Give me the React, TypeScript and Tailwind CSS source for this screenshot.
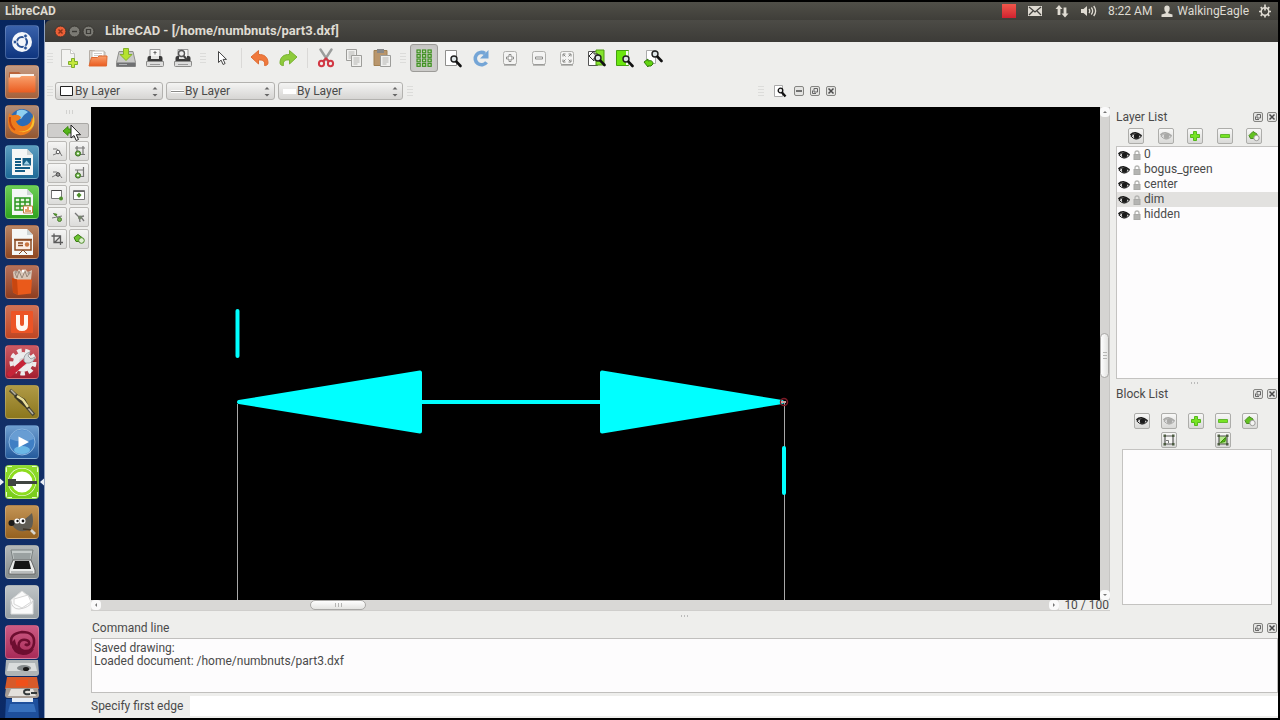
import React, { useState } from "react";
import type { ReactNode } from "react";

/* ---------- shared pieces ---------- */

function Svg({ size = 20, className = "", children }: { size?: number; className?: string; children: ReactNode }) {
  return (
    <svg viewBox={`0 0 ${size} ${size}`} width={size} height={size} className={`block shrink-0 ${className}`} aria-hidden="true">
      {children}
    </svg>
  );
}

function Handle({ className }: { className: string }) {
  return (
    <span className={`flex shrink-0 flex-col items-center justify-center gap-0.5 ${className}`} aria-hidden="true">
      {[0, 1, 2, 3].map((i) => (
        <span key={i} className="h-px w-1.5 bg-[#dcdcda]" />
      ))}
    </span>
  );
}

function ToolButton({ label, pressed, children }: { label: string; pressed?: boolean; children: ReactNode }) {
  return (
    <button
      type="button"
      aria-label={label}
      title={label}
      aria-pressed={pressed}
      className={`flex h-7 w-7 shrink-0 items-center justify-center rounded-[3px] border ${
        pressed ? "border-[#9c9b98] bg-[#cdccca] shadow-inner" : "border-transparent"
      }`}
    >
      {children}
    </button>
  );
}

/* ---------- main toolbar icons ---------- */

const Magnifier = ({ x = 0, y = 0 }: { x?: number; y?: number }) => (
  <g transform={`translate(${x} ${y})`}>
    <circle cx="4" cy="4" r="3" fill="#dfe6e8" stroke="#222" strokeWidth="1.400" />
    <path d="M6.4 6.6 10.500 11" stroke="#111" strokeWidth="2.600" strokeLinecap="round" />
  </g>
);

const NewIcon = () => (
  <Svg>
    <path d="M2.5 1.5h9l4 4v13h-13z" fill="#f3f3f1" stroke="#bdbdb9" />
    <path d="M11.5 1.5v4h4" fill="#fff" stroke="#c6c6c2" />
    <path d="M12.5 10.5h3v3h3v3h-3v3h-3v-3h-3v-3h3z" fill="#c5e83c" stroke="#7fae2c" />
  </Svg>
);
const OpenIcon = () => (
  <Svg>
    <path d="M1.5 17V2.500h5l1.5 1.5h9V16" fill="#dcd9d4" stroke="#b5aea6" />
    <path d="M4 3h12v8H4z" fill="#fff" stroke="#c2beb8" />
    <path d="M6 5.500h8M6 7.500h8" stroke="#ccc" />
    <path d="M1 18 3.500 9.500h6l1.500-1.500h8L18.500 18z" fill="url(#folderOrange)" stroke="#e0682f" />
  </Svg>
);
const SaveIcon = () => (
  <Svg>
    <path d="M3 3.500h14l2.500 11v4h-19v-4z" fill="#c9c9c7" stroke="#8e8e8c" />
    <path d="M.8 14.500h18.400v4H.8z" fill="#6f7072" />
    <path d="M3 16.500h8" stroke="#aeb0b2" />
    <path d="M7.500.5h5v6h3.500L10 12.500 4 6.500h3.500z" fill="#b5e22f" stroke="#84b22a" />
  </Svg>
);
const PrintIcon = ({ preview = false }: { preview?: boolean }) => (
  <Svg>
    <path d="M5 1.500h10V9H5z" fill="#f6f6f5" stroke="#999" />
    <path d="M2.500 10Q2.500 8 4.500 8h11q2 0 2 2v4h-15z" fill="#3a3a3a" />
    <path d="M6 8h8v3H6z" fill="#e3e3e1" />
    <path d="M1.500 13.500h17v4q0 1-1 1h-15q-1 0-1-1z" fill="#dededd" stroke="#8c8c8a" />
    <path d="M5 16.500h10" stroke="#999" />
    {preview ? (
      <>
        <circle cx="8.500" cy="5.500" r="3" fill="#eee" stroke="#555" strokeWidth="1.400" />
        <path d="m10.800 8 3 3.500" stroke="#444" strokeWidth="2" />
      </>
    ) : (
      <path d="M10 3v3.500M8.500 4.500h3" stroke="#666" />
    )}
  </Svg>
);
const PointerIcon = () => (
  <Svg>
    <path d="M6.500 3.500v11l2.600-2.400 2 4.400 2-1-2-4.100h3.400z" fill="#fff" stroke="#444" />
  </Svg>
);
const UndoIcon = () => (
  <Svg>
    <path d="M1 9 8.500 2.500v4c5.500-.3 9.500 2.500 9.500 8.500 0 1.500-1.800 3-3.500 2.500 1-4-1.500-6-6-5.500v4z" fill="#f0793c" stroke="#dd6c33" />
  </Svg>
);
const RedoIcon = () => (
  <Svg>
    <path d="M19 9 11.500 2.500v4C6 6.200 2 9 2 15c0 1.500 1.800 3 3.500 2.500-1-4 1.500-6 6-5.500v4z" fill="#8ecb3b" stroke="#79b232" />
  </Svg>
);
const CutIcon = () => (
  <Svg>
    <path d="M4.500 1.500 12 13M15.500 1.500 8 13" stroke="#9b9d9c" strokeWidth="2.400" strokeLinecap="round" />
    <ellipse cx="5.500" cy="15.500" rx="2.600" ry="2.800" fill="none" stroke="#d23844" strokeWidth="2" />
    <ellipse cx="14.500" cy="15.500" rx="2.600" ry="2.800" fill="none" stroke="#d23844" strokeWidth="2" />
    <path d="m7.500 13 2.500-2.500 2.500 2.500" fill="none" stroke="#d23844" strokeWidth="2" />
  </Svg>
);
const Sheet = ({ x, y }: { x: number; y: number }) => (
  <g transform={`translate(${x} ${y})`}>
    <path d="M.5.5h10v11H.5z" fill="#f1f1ef" stroke="#9d9d9a" />
    <path d="M2.500 3h6M2.500 5h6M2.500 7h6M2.500 9h4" stroke="#b5b5b2" />
  </g>
);
const CopyIcon = () => (
  <Svg>
    <Sheet x={2} y={1} />
    <Sheet x={7} y={7} />
  </Svg>
);
const PasteIcon = () => (
  <Svg>
    <path d="M2 2.500h13v15H2z" fill="#b9966c" stroke="#a08052" />
    <path d="M5 1h7v4H5z" fill="#888" />
    <Sheet x={8} y={7} />
  </Svg>
);
const GridIcon = () => (
  <Svg>
    {[3, 8.5, 14].map((x) =>
      [2, 6.500, 11, 15.500].map((y) => (
        <rect key={`${x}-${y}`} x={x} y={y} width="3.200" height="2.800" fill="#bfdcab" stroke="#3f8f22" strokeWidth="1.200" />
      ))
    )}
  </Svg>
);
const PageZoom = () => (
  <Svg>
    <path d="M2.500 2.500h11v15h-11z" fill="#fff" stroke="#8f8f8d" />
    <Magnifier x={7} y={7} />
  </Svg>
);
const RefreshIcon = () => (
  <Svg>
    <path d="M15.500 14.200A6.200 6.200 0 1 1 14 5.500" fill="none" stroke="#74a5d6" strokeWidth="3.600" />
    <path d="M17.500 2v8.500H9z" fill="#74a5d6" />
  </Svg>
);
const ZoomBox = ({ children }: { children: ReactNode }) => (
  <Svg>
    <rect x="3.500" y="3.500" width="13" height="13" rx="2" fill="#f4f4f3" stroke="#b0b0ad" />
    <path d="M4 17h12" stroke="#858582" />
    {children}
  </Svg>
);
const PageSwap = () => (
  <Svg>
    <path d="M2.500 3.500h9v14h-9z" fill="#fff" stroke="#555" />
    <path d="M10 2h8v15h-8z" fill="#84e22c" stroke="#4e9a10" />
    <path d="M3 8 8 3v3h4v4H8v3z" fill="#f5f5f5" stroke="#333" />
    <Magnifier x={8} y={6} />
  </Svg>
);
const PageGreen = () => (
  <Svg>
    <path d="M2.500 2.500h12v15h-12z" fill="#6be60f" stroke="#44a010" />
    <path d="M12 3v14h2.500V3z" fill="#f6fbf0" />
    <Magnifier x={8} y={7} />
  </Svg>
);
const PagePan = () => (
  <Svg>
    <path d="M3.500 2.500h9v13h-9z" fill="#fff" stroke="#aaa" />
    <Magnifier x={8} y={2} />
    <path d="m1 14 4-3v2c3-1 5 0 5 3l-2 2H5v1z" fill="#63d411" stroke="#2e7a08" />
  </Svg>
);

/* ---------- window buttons ---------- */

function MiniButton({ kind, label }: { kind: "min" | "float" | "close"; label: string }) {
  return (
    <button type="button" aria-label={label} title={label} className="flex h-3 w-3 shrink-0 items-center justify-center">
      <Svg size={12}>
        <rect x="1.500" y="1.500" width="9" height="9" rx="1.500" fill="#e4e4e2" stroke="#858582" />
        {kind === "min" && <path d="M3 6h6" stroke="#555" strokeWidth="1.600" />}
        {kind === "float" && <path d="M5 3.500h3.500V7H5zM3.500 5.500v3H7" fill="none" stroke="#666" />}
        {kind === "close" && <path d="m3.500 3.500 5 5m0-5-5 5" stroke="#4a4a4a" strokeWidth="1.500" />}
      </Svg>
    </button>
  );
}

/* ---------- dock icons ---------- */

const Eye = ({ color = "#1b1b1b" }: { color?: string }) => (
  <Svg size={12}>
    <path d="M.5 5Q5 0 11.500 6" fill="none" stroke={color} strokeWidth="1.600" />
    <path d="M.8 6Q6 12 11.300 6.500 6 1.500.8 6" fill="#ddd" stroke={color} />
    <circle cx="6.500" cy="6.200" r="2.600" fill={color} />
  </Svg>
);
const Lock = () => (
  <Svg size={10}>
    <path d="M3 5V3q0-2 2-2t2 2v2" fill="none" stroke="#b4b4b2" strokeWidth="1.300" />
    <rect x="2" y="4.500" width="6" height="5" fill="#b4b4b2" stroke="#a9a9a7" />
  </Svg>
);
const Plus = () => (
  <Svg size={12}>
    <path d="M4.500 1.500h3v3h3v3h-3v3h-3v-3h-3v-3h3z" fill="#77e423" stroke="#55b81c" />
  </Svg>
);
const Minus = () => (
  <Svg size={12}>
    <path d="M1.500 4.500h9v3h-9z" fill="#77e423" stroke="#62b830" />
  </Svg>
);
const Edit = () => (
  <Svg size={12}>
    <path d="M1 5.500 5 1.500l4 2.500 0 4.500H2.500z" fill="#62c220" stroke="#4c8a26" />
    <circle cx="8.500" cy="8" r="2.700" fill="#f4f4f2" stroke="#9c9c99" />
  </Svg>
);
const Frame = ({ green = false }: { green?: boolean }) => (
  <Svg size={12}>
    <path d="M2 2h8v8H2z" fill={green ? "#b7e88f" : "#f5f5f3"} stroke="#555" strokeWidth="1.200" />
    <path d="M.5.5h2.500v2.500H.5zM9 .5h2.500v2.500H9zM.5 9h2.500v2.500H.5zM9 9h2.500v2.500H9z" fill="#4c5c40" />
    {green ? <path d="m3.500 8.500 5-5-.5 4z" fill="#56c411" stroke="#3b8a0d" /> : <path d="M3 6.500h2.500V9" stroke="#777" fill="none" />}
  </Svg>
);

function DockButton({ label, children }: { label: string; children: ReactNode }) {
  return (
    <button
      type="button"
      aria-label={label}
      title={label}
      className="flex h-4 w-4 shrink-0 items-center justify-center rounded-[2px] border border-[#adadaa] bg-linear-to-b from-[#f8f8f7] to-[#d9d9d7]"
    >
      {children}
    </button>
  );
}

function DockTitle({ title }: { title: string }) {
  return (
    <div className="flex items-center">
      <h2 className="flex-1 leading-4">{title}</h2>
      <div className="flex gap-0.5">
        <MiniButton kind="float" label={`Detach ${title}`} />
        <MiniButton kind="close" label={`Close ${title}`} />
      </div>
    </div>
  );
}

/* ---------- launcher ---------- */

function Tile({ label, tone, children }: { label: string; tone: string; children: ReactNode }) {
  return (
    <button
      type="button"
      aria-label={label}
      title={label}
      className={`h-[34px] w-[34px] shrink-0 overflow-hidden rounded-[4px] border border-white/20 bg-linear-to-b ${tone}`}
    >
      <svg viewBox="1 1 32 32" className="block h-full w-full" aria-hidden="true">
        {children}
      </svg>
    </button>
  );
}

const DocPage = () => (
  <>
    <path d="M7 4h15l6 6v20H7z" fill="#f5f7f6" />
    <path d="M22 4v6h6z" fill="#cfd6d6" />
  </>
);

function Launcher() {
  return (
    <nav
      aria-label="Launcher"
      className="relative flex w-[45px] shrink-0 flex-col gap-1.5 overflow-hidden border-r border-[#8fa0bd] bg-linear-to-b from-[#07265f] via-[#143067] to-[#0b2a66] pt-[5px] pl-[5px]"
    >
      <Tile label="Dash home" tone="from-[#3a62ab] to-[#0e357f]">
        <circle cx="17" cy="17" r="10" fill="#f4f7fb" />
        <circle cx="17" cy="17" r="5" fill="none" stroke="#2a5296" strokeWidth="2.200" />
        <path d="m17 17-9 0M17 17l5-8.500M17 17l5 8.500" stroke="#f4f7fb" strokeWidth="1.200" />
        <circle cx="10" cy="17" r="1.900" fill="#2a5296" stroke="#f4f7fb" strokeWidth=".8" />
        <circle cx="20.500" cy="11" r="1.900" fill="#2a5296" stroke="#f4f7fb" strokeWidth=".8" />
        <circle cx="20.500" cy="23" r="1.900" fill="#2a5296" stroke="#f4f7fb" strokeWidth=".8" />
        <circle cx="17" cy="17" r="3.200" fill="#f4f7fb" />
      </Tile>
      <Tile label="Home folder" tone="from-[#c39a82] to-[#a5603a]">
        <path d="M4 8q0-1 1-1h9l2 2h13v6H4z" fill="#b9633a" />
        <path d="M5 9h24v5H5z" fill="#faf1ea" />
        <path d="M3.500 12.500h11l2-1.500h14V26q0 1.500-1.500 1.500H5Q3.500 27.500 3.500 26z" fill="url(#folderOrange)" />
      </Tile>
      <Tile label="Firefox" tone="from-[#b18d78] to-[#93562f]">
        <circle cx="17" cy="16" r="12" fill="#2c6cb5" />
        <path d="M12 6q6-3 11 1l-4 3-3 4-5-2z" fill="#8fd0f0" />
        <path d="M4 8q2 3 5 2 4-1 7 2-1 3-5 4 2 6 8 5 7-1 8-9 4 7 0 12-5 7-13 6Q3 28 3 17q0-5 1-9z" fill="#ee7c1c" />
        <path d="M28 9q4 9-2 15-6 5-13 2 9 2 13-5 2-4 2-12z" fill="#f9c22c" />
        <path d="M5 12q-1 9 5 13" stroke="#c94a10" strokeWidth="2" fill="none" />
      </Tile>
      <Tile label="LibreOffice Writer" tone="from-[#5b9dc0] to-[#1d6a97]">
        <DocPage />
        <path d="M10 14h6M10 17h6M10 20h6M10 23h15M10 26h10" stroke="#145d85" strokeWidth="1.800" />
        <path d="M17.500 13h8.500v7.500h-8.500z" fill="#145d85" />
        <path d="m18.500 19.500 3-4 3.500 4z" fill="#9fd0e6" />
      </Tile>
      <Tile label="LibreOffice Calc" tone="from-[#6cce55] to-[#2fa31d]">
        <DocPage />
        <path d="M10 13h15v12H10zM10 17h15M10 21h15M15 13v12M20 13v12" fill="#e7f6df" stroke="#2b9620" strokeWidth="1.500" />
        <path d="M18.500 21h9v7h-9z" fill="#fff" stroke="#c07a3c" />
        <path d="M21 27v-3M23 27v-5M25 27v-2" stroke="#d8823a" strokeWidth="1.500" />
      </Tile>
      <Tile label="LibreOffice Impress" tone="from-[#b98564] to-[#8f4720]">
        <DocPage />
        <path d="M10 15h16v10H10z" fill="#fbeee4" stroke="#8a4a22" strokeWidth="1.500" />
        <path d="M9 14.500h18M13 18h5M13 20.500h5" stroke="#8a4a22" strokeWidth="1.500" />
        <circle cx="22" cy="19.500" r="2.200" fill="#cb7740" />
        <path d="m14 29 4-4 4 4" stroke="#8a4a22" fill="none" />
      </Tile>
      <Tile label="Ubuntu Software Center" tone="from-[#b5715a] to-[#8f3d1e]">
        <path d="M8 7q2-3 4 0l2-3 3 3 3-3 3 3 4-2-1 10H9z" fill="#d9c7b8" />
        <path d="m10 8 2 5 2-7 3 7 3-7 2 6 3-5" stroke="#9a8778" fill="none" />
        <circle cx="11" cy="7" r="1.500" fill="#a79a90" />
        <circle cx="18" cy="6" r="1.500" fill="#fff" />
        <circle cx="24" cy="8" r="1.500" fill="#a79a90" />
        <path d="m7 13 5 1.500h15l-1 14-13 1.500-5-2.500z" fill="#ea5a1b" />
        <path d="m7 13 5 1.500 1 15.500-5-2.500z" fill="#c8460f" />
      </Tile>
      <Tile label="Ubuntu One" tone="from-[#cf7255] to-[#c04522]">
        <rect x="6" y="6" width="22" height="22" rx="1" fill="#ec5426" />
        <path d="M11 10h4v9q0 2 2 2t2-2v-9h4v10q0 6-6 6t-6-6z" fill="#fff6ef" />
      </Tile>
      <Tile label="System Settings" tone="from-[#cc5a63] to-[#a31d30]">
        <circle cx="18" cy="17" r="11.500" fill="none" stroke="#ececec" strokeWidth="4" strokeDasharray="4.500 3.500" />
        <circle cx="18" cy="17" r="7" fill="#d9cfd0" stroke="#ececec" strokeWidth="6" />
        <path d="M5 29 20 16" stroke="#c62438" strokeWidth="5.500" strokeLinecap="round" />
        <path d="M19 16q-1-7 6-9l-2 4 3 3 4-2q-2 7-9 6z" fill="#dadde0" stroke="#9ea2a6" />
      </Tile>
      <Tile label="Audio plug" tone="from-[#b09a45] to-[#8c771c]">
        <path d="M5 5 14 13M22 22l7 8" stroke="#4b4838" strokeWidth="3.500" />
        <path d="M6 5l7 7M23 23l5 6" stroke="#b7b3a0" strokeWidth="1.500" />
        <path d="m11 9 9 5 5 9-3 1-8-7-5-5z" fill="#3a3724" />
        <path d="m12 11 6 4 5 7" stroke="#eadf9a" strokeWidth="2.400" fill="none" />
      </Tile>
      <Tile label="Movie Player" tone="from-[#6f9fd0] to-[#245a9c]">
        <circle cx="17" cy="17" r="13" fill="#3f7fc4" stroke="#8cb6de" />
        <path d="M5 14q2-9 12-9t12 9q-12 5-24 0z" fill="#7ba9da" opacity=".7" />
        <ellipse cx="17" cy="25" rx="8" ry="4" fill="#7fd0f5" opacity=".7" />
        <path d="m13.500 11.500 10.500 5.500-10.500 5.500z" fill="#fff" />
      </Tile>
      <Tile label="LibreCAD" tone="from-[#8fdc2c] to-[#78cc1a]">
        <path d="M1 7V1h6M27 1h6v6M33 27v6h-6M7 33H1v-6" fill="none" stroke="#e9fbd0" strokeWidth="2" />
        <circle cx="17" cy="17" r="14" fill="#fff" />
        <circle cx="17" cy="17" r="12" fill="none" stroke="#8edc1f" strokeWidth="3" />
        <path d="M3 14h8v7H3z" fill="#3f4540" />
        <path d="M10 17.500h22" stroke="#3f4540" strokeWidth="3" />
      </Tile>
      <Tile label="GIMP" tone="from-[#c39454] to-[#95611f]">
        <path d="M6 17q2-3 5-2 4-3 9-1 4-3 7-6 2 8 0 14-5 5-12 4-6-1-9-9z" fill="#5f5c54" />
        <circle cx="6.500" cy="18" r="3" fill="#1b1b1b" />
        <circle cx="12" cy="16" r="2.600" fill="#fff" />
        <circle cx="17.500" cy="16" r="3" fill="#fff" />
        <circle cx="12.500" cy="16" r="1.200" fill="#111" />
        <circle cx="18" cy="16" r="1.400" fill="#111" />
        <path d="m18 24 8 1" stroke="#41362a" strokeWidth="1.500" fill="none" />
        <path d="m26 25 4 4" stroke="#d8d4cc" strokeWidth="2.600" />
      </Tile>
      <Tile label="Simple Scan" tone="from-[#b3b7b7] to-[#868c8c]">
        <path d="m6 5 22 0-2 10H8z" fill="#c6cccb" stroke="#7b8282" />
        <path d="m8 8 18 0-1 6H9z" fill="#9aa1a1" />
        <path d="M8 15h18l4 10v4H4v-4z" fill="#e9ebea" stroke="#666" />
        <path d="M10 16h14l2 8H8z" fill="#151515" />
        <path d="M6 27h22" stroke="#8a8f8f" />
      </Tile>
      <Tile label="Mail" tone="from-[#bfc4c6] to-[#989fa3]">
        <path d="M6 15 17 6l11 9v14H6z" fill="#fafafa" stroke="#dcdddd" />
        <path d="m9 14 14-4 3 7-9 6-8-4z" fill="#fff" stroke="#d6d6d6" />
        <path d="M6 16q1 8 8 8 10-1 14-8" fill="none" stroke="#d0d0d0" />
      </Tile>
      <Tile label="Chat" tone="from-[#cc5a84] to-[#a82a58]">
        <path d="M7 20Q3 9 17 7q13 0 12 11-1 9-10 8-7-2-5-8 2-4 7-3 4 1 3 4-2 2-4 0" fill="none" stroke="#6d0e30" strokeWidth="2.600" />
        <path d="M6 18q1 11 12 12 8 0 11-6-9 4-15-1-4-4-4-9z" fill="#6d0e30" />
      </Tile>
      <svg viewBox="0 0 34 60" className="-mt-[5px] block h-[60px] w-[34px] shrink-0" aria-hidden="true">
        <path d="M1 0h32l1 13q0 3-3 3H3q-3 0-3-3z" fill="#aeb4b6" />
        <path d="M4 3h26l2 8H2z" fill="#d9dcdc" />
        <ellipse cx="19" cy="8" rx="7" ry="3" fill="#84898b" />
        <ellipse cx="21" cy="9" rx="3" ry="2" fill="#171717" />
        <path d="M2 17h30l2 12H0z" fill="#d65a2a" />
        <path d="M11 20h12v6H11z" fill="#f0501a" />
        <path d="M1 28h32l1 7q0 3-3 3H3q-3 0-3-3z" fill="#a79c94" />
        <path d="M6 29h22l3 7H3z" fill="#e3e0dc" />
        <path d="M25 30q-6-1-6 2t6 2m1-1h6" stroke="#33393b" strokeWidth="2" fill="none" />
        <path d="M1 39h32l1 21H0z" fill="#1e4f9c" />
        <path d="M7 38h21v4H7z" fill="#e4ecf7" />
        <path d="M5 44h24l2 8H3z" fill="#3770bd" />
      </svg>
      <svg viewBox="0 0 45 10" className="pointer-events-none absolute top-[457px] left-0 block h-[10px] w-[45px]" aria-hidden="true">
        <path d="M0 1.500 4 5 0 8.500zM44 1.500 40 5l4 3.500z" fill="#e8edf5" />
      </svg>
    </nav>
  );
}

/* ---------- top panel ---------- */

function TopPanel() {
  return (
    <header className="flex h-[18px] shrink-0 items-center bg-linear-to-b from-[#504f48] to-[#3f3e39] pr-1.5 pl-[5px] text-[#dfdbd2]">
      <span className="flex-1 font-bold">LibreCAD</span>
      <div className="flex items-center">
        <button type="button" aria-label="Recording" className="mr-[11px] h-3.5 w-3.5 bg-linear-to-b from-[#f0564a] to-[#cf2030]" />
        <button type="button" aria-label="Messages" className="mr-3">
          <svg viewBox="0 0 16 12" className="block h-3 w-4" aria-hidden="true">
            <path d="M1 1h14v10H1z" fill="#dfdbd2" />
            <path d="m2 2 6 5 6-5M2 10l4-4m8 4-4-4" fill="none" stroke="#454440" strokeWidth="1.300" />
          </svg>
        </button>
        <button type="button" aria-label="Network" className="mr-[11px]">
          <Svg size={14}>
            <path d="M4 1 7.500 5H5.400v6H2.600V5H.5zM10 13.500 6.500 9.500h2.100v-6h2.800v6h2.100z" fill="#dfdbd2" />
          </Svg>
        </button>
        <button type="button" aria-label="Sound" className="mr-[11px]">
          <svg viewBox="0 0 17 14" className="block h-3.5 w-[17px]" aria-hidden="true">
            <path d="M1 5h2.500L7 2v10L3.500 9H1z" fill="#dfdbd2" />
            <path d="M9 5q1.500 2 0 4M11.300 3.500q2.700 3.500 0 7M13.700 2q3.800 5 0 10" fill="none" stroke="#dfdbd2" strokeWidth="1.300" />
          </svg>
        </button>
        <time className="mr-[9px]">8:22 AM</time>
        <button type="button" className="mr-[9px] flex items-center gap-1">
          <Svg size={12}>
            <path d="M6 .5q2.700 0 2.700 3T7.300 7v1.200l4.200 1.300V12H.5V9.500l4.200-1.300V7Q3.300 6.500 3.300 3.500T6 .5z" fill="#dfdbd2" />
          </Svg>
          WalkingEagle
        </button>
        <button type="button" aria-label="Session">
          <Svg size={14}>
            <circle cx="7" cy="7.500" r="3.800" fill="none" stroke="#dfdbd2" strokeWidth="1.500" />
            <path d="M7 .5v6M1 7.500h2.500M10.500 7.500H13M2.700 3.200l2 2M11.300 3.200l-2 2M2.700 11.800l2-2M11.300 11.800l-2-2M7 11v2.500" stroke="#dfdbd2" strokeWidth="1.700" />
          </Svg>
        </button>
      </div>
    </header>
  );
}

function TitleBar() {
  return (
    <div className="flex h-[22px] shrink-0 items-center rounded-tl-md bg-linear-to-b from-[#4c4b46] to-[#3c3b37] pl-[9px] text-[#dfdbd2]">
      <div className="flex gap-px">
        <button type="button" aria-label="Close window">
          <Svg size={13}>
            <circle cx="6.500" cy="6.500" r="5.500" fill="#ec5f36" stroke="#35332e" />
            <path d="m4.500 4.500 4 4m0-4-4 4" stroke="#8a3218" strokeWidth="1.400" />
          </Svg>
        </button>
        <button type="button" aria-label="Minimize window">
          <Svg size={13}>
            <circle cx="6.500" cy="6.500" r="5.500" fill="#7b7a74" stroke="#35332e" />
            <path d="M4 6.500h5" stroke="#3b3a36" strokeWidth="1.400" />
          </Svg>
        </button>
        <button type="button" aria-label="Maximize window">
          <Svg size={13}>
            <circle cx="6.500" cy="6.500" r="5.500" fill="#7b7a74" stroke="#35332e" />
            <path d="M4.500 4.500h4v4h-4z" fill="none" stroke="#3b3a36" strokeWidth="1.200" />
          </Svg>
        </button>
      </div>
      <h1 className="ml-2.5 text-[13px] font-bold">LibreCAD - [/home/numbnuts/part3.dxf]</h1>
    </div>
  );
}

/* ---------- toolbars ---------- */

const Separator = () => (
  <span className="flex h-5 w-2.5 shrink-0 justify-center" aria-hidden="true">
    <span className="w-px bg-[#dad9d7]" />
  </span>
);

function MainToolbar() {
  return (
    <div role="toolbar" aria-label="Main" className="flex h-8 shrink-0 items-center">
      <Handle className="w-2.5" />
      <div className="flex w-[142px] justify-between">
        <ToolButton label="New"><NewIcon /></ToolButton>
        <ToolButton label="Open"><OpenIcon /></ToolButton>
        <ToolButton label="Save"><SaveIcon /></ToolButton>
        <ToolButton label="Print"><PrintIcon /></ToolButton>
        <ToolButton label="Print preview"><PrintIcon preview /></ToolButton>
      </div>
      <Handle className="w-[11px]" />
      <ToolButton label="Select"><PointerIcon /></ToolButton>
      <Separator />
      <ToolButton label="Undo"><UndoIcon /></ToolButton>
      <ToolButton label="Redo"><RedoIcon /></ToolButton>
      <Separator />
      <ToolButton label="Cut"><CutIcon /></ToolButton>
      <ToolButton label="Copy"><CopyIcon /></ToolButton>
      <ToolButton label="Paste"><PasteIcon /></ToolButton>
      <Handle className="w-3.5" />
      <div className="flex w-[257px] justify-between">
        <ToolButton label="Grid" pressed><GridIcon /></ToolButton>
        <ToolButton label="Zoom page"><PageZoom /></ToolButton>
        <ToolButton label="Redraw"><RefreshIcon /></ToolButton>
        <ToolButton label="Zoom in">
          <ZoomBox><path d="M9 6.500h2v2.500h2.500v2H11v2.500H9V11H6.500V9H9z" fill="#fff" stroke="#8b8b88" /></ZoomBox>
        </ToolButton>
        <ToolButton label="Zoom out">
          <ZoomBox><path d="M6.500 9h7v2h-7z" fill="#fff" stroke="#8b8b88" /></ZoomBox>
        </ToolButton>
        <ToolButton label="Auto zoom">
          <ZoomBox><path d="M6 8.500V6h2.500M11.500 6H14v2.500M14 11.500V14h-2.500M8.500 14H6v-2.500M6.500 6.500l2 2M13.500 6.500l-2 2M6.500 13.500l2-2M13.500 13.500l-2-2" fill="none" stroke="#858582" /></ZoomBox>
        </ToolButton>
        <ToolButton label="Previous view"><PageSwap /></ToolButton>
        <ToolButton label="Zoom window"><PageGreen /></ToolButton>
        <ToolButton label="Pan"><PagePan /></ToolButton>
      </div>
    </div>
  );
}

function Combo({ label, width, pad, children }: { label: string; width: string; pad: string; children: ReactNode }) {
  return (
    <label className={`relative flex h-[18px] shrink-0 items-center rounded-[3px] border border-[#b3b2af] bg-linear-to-b from-[#f4f4f3] to-[#d6d5d3] ${width}`}>
      <span className="pointer-events-none absolute left-1">{children}</span>
      <select aria-label={label} className={`h-full w-full appearance-none bg-transparent leading-4 outline-none ${pad}`}>
        <option>By Layer</option>
      </select>
      <svg viewBox="0 0 6 12" className="pointer-events-none absolute right-1 h-3 w-1.5" aria-hidden="true">
        <path d="M.5 4.500 3 2l2.500 2.500zM.5 9 3 11.500 5.500 9z" fill="#666" />
      </svg>
    </label>
  );
}

function PenToolbar() {
  return (
    <div role="toolbar" aria-label="Pen" className="flex h-[33px] shrink-0 items-center">
      <Handle className="w-2.5" />
      <div className="flex gap-[3px]">
        <Combo label="Color" width="w-[108px]" pad="pl-[19px]">
          <svg viewBox="0 0 13 10" className="block h-2.5 w-[13px]" aria-hidden="true">
            <path d="M.5.5h12v9H.5z" fill="#fff" stroke="#222" />
          </svg>
        </Combo>
        <Combo label="Width" width="w-[109px]" pad="pl-[18px]">
          <svg viewBox="0 0 13 10" className="block h-2.5 w-[13px]" aria-hidden="true">
            <path d="M0 4h13v3H0z" fill="#fff" />
            <path d="M0 5.500h13" stroke="#8a8a88" />
          </svg>
        </Combo>
        <Combo label="Line type" width="w-[125px]" pad="pl-[18px]">
          <svg viewBox="0 0 13 10" className="block h-2.5 w-[13px]" aria-hidden="true">
            <path d="M0 3h13v5H0z" fill="#fff" />
          </svg>
        </Combo>
      </div>
      <Handle className="w-3.5" />
      <span className="w-[338px] shrink" />
      <Handle className="w-3" />
      <div className="flex items-center gap-1">
        <button type="button" aria-label="Zoom page" className="mr-0.5 ml-1.5">
          <Svg size={14}>
            <path d="M1.500 1.500h8v11h-8z" fill="#fff" stroke="#aaa" />
            <circle cx="7.500" cy="6.500" r="2.300" fill="#eee" stroke="#111" strokeWidth="1.300" />
            <path d="m9 8.500 3.500 4" stroke="#111" strokeWidth="2.400" />
          </Svg>
        </button>
        <MiniButton kind="min" label="Minimize drawing" />
        <MiniButton kind="float" label="Restore drawing" />
        <MiniButton kind="close" label="Close drawing" />
      </div>
    </div>
  );
}

/* ---------- CAD tool palette ---------- */

const palette: { label: string; art: ReactNode }[] = [
  { label: "Line parallel", art: <><path d="M3 5q4-1 6 2l3 5M3 11l5-2" stroke="#777" fill="none" /><circle cx="8" cy="8" r="1.800" fill="#fff" stroke="#555" /></> },
  { label: "Rectangle", art: <><path d="M5 2v5M3 4h10M11 2v8M7 10.500h6" stroke="#777" strokeWidth="1.200" fill="none" /><circle cx="6" cy="9.500" r="2.600" fill="#6cb644" stroke="#3b6e22" /><circle cx="6" cy="9.500" r="1" fill="#fff" /></> },
  { label: "Arc", art: <><path d="M3 6q4-1 6 2l3 4M2 11l6-3" stroke="#777" fill="none" /><circle cx="8" cy="8.500" r="1.800" fill="#999" stroke="#444" /></> },
  { label: "Polygon", art: <><path d="M5.500 7V4h6v6.500H9M11.500 1v3M3 4h3" stroke="#777" strokeWidth="1.200" fill="none" /><circle cx="6" cy="9.500" r="2.600" fill="#6cb644" stroke="#3b6e22" /><circle cx="6" cy="9.500" r="1" fill="#fff" /></> },
  { label: "Hatch", art: <><path d="M1.500 2.500h10v8h-10z" fill="#fff" stroke="#777" /><path d="M1.500 2.500h10" stroke="#444" /><circle cx="11" cy="10.500" r="2" fill="#4d8f2a" /></> },
  { label: "Image", art: <><path d="M1.500 2.500h11v9h-11z" fill="#fff" stroke="#777" /><path d="M1.500 3.500h11" stroke="#666" /><path d="m7 4.500 2.500 2.500L7 10 4.500 7z" fill="#4d8f2a" /></> },
  { label: "Modify", art: <><path d="m3 3 7 7M2 8l10-2" stroke="#777" /><circle cx="9.500" cy="9.500" r="2" fill="#79b74e" stroke="#4b7e32" /><path d="m4 4 3 1" stroke="#4d8f2a" strokeWidth="2" /></> },
  { label: "Measure", art: <><path d="m3 3 4 4 5-1M7 6l1 6M9 7l3 4" stroke="#777" strokeWidth="1.300" fill="none" /><circle cx="8" cy="7.500" r="2" fill="#76856d" /></> },
  { label: "Block", art: <path d="M4 1.500v9h9M1.500 4h9v9M5 10l5-5" stroke="#5b5b5b" strokeWidth="1.300" fill="none" /> },
  { label: "Select", art: <><path d="m2 5.500 4-3 4 3-2 4H4z" fill="#6dc432" stroke="#3b7a16" /><circle cx="9.500" cy="8.500" r="2.800" fill="#dff0d2" stroke="#4b8a26" /></> },
];

function Palette() {
  const face = "flex items-center justify-center rounded-[2px] border border-[#bbbab7] bg-linear-to-b from-[#f5f5f4] to-[#dcdcda]";
  return (
    <div role="toolbar" aria-label="CAD tools" className="relative flex w-[46px] shrink-0 flex-col gap-0.5 pt-px pl-0.5">
      <span className="flex h-[13px] w-11 justify-center gap-0.5 pt-0.5" aria-hidden="true">
        {[0, 1, 2].map((i) => (
          <span key={i} className="h-1 w-px bg-[#d2d2d0]" />
        ))}
      </span>
      <button type="button" aria-label="Back" className="flex h-[15px] w-[42px] items-center justify-center rounded-[2px] border border-[#a9a8a5] bg-[#cfcecc]">
        <Svg size={12}>
          <path d="M1 6 6 1.500v2.500h4v4H6v2.500z" fill="#55b51a" stroke="#3c8a10" />
        </Svg>
      </button>
      <div className="grid w-[42px] grid-cols-2 gap-x-0.5 gap-y-0.5 pt-px">
        {palette.map((t) => (
          <button key={t.label} type="button" aria-label={t.label} title={t.label} className={`h-5 w-5 ${face}`}>
            <Svg size={14}>{t.art}</Svg>
          </button>
        ))}
      </div>
      <svg viewBox="0 0 12 18" className="pointer-events-none absolute top-[17px] left-[25px] z-10 h-[18px] w-3" aria-hidden="true">
        <path d="M1 1v13l3-2.500 2.200 5 2.300-1-2.200-4.800h4.200z" fill="#fff" stroke="#222" />
      </svg>
    </div>
  );
}

/* ---------- drawing area ---------- */

function Drawing() {
  return (
    <svg className="block h-full w-full bg-black" role="img" aria-label="Dimension drawing">
      <g stroke="#a8a8a8" strokeWidth="1">
        <path d="M146.500 297V1400" />
        <path d="M693.500 295V1400" />
      </g>
      <g stroke="#00ffff" strokeWidth="4" strokeLinecap="round">
        <path d="M146.500 204v45" />
        <path d="M693 341v45" />
        <path d="M331 295h178" />
      </g>
      <g fill="#00ffff" stroke="#00ffff" strokeWidth="4" strokeLinejoin="round">
        <path d="M148 295 329 265.500v59z" />
        <path d="M691 295 511 265.500v59z" />
      </g>
      <circle cx="693" cy="295" r="3.500" fill="none" stroke="#7a1a26" strokeWidth="1.500" />
      <path d="M690 295h5" stroke="#c9a0a0" strokeWidth="2" />
    </svg>
  );
}

function ScrollArrow({ d }: { d: string }) {
  return (
    <span className="flex h-2.5 w-2.5 shrink-0 items-center justify-center rounded-[4px] bg-[#fafafa]">
      <Svg size={6}>
        <path d={d} fill="#777" />
      </Svg>
    </span>
  );
}

function CanvasArea() {
  return (
    <main className="flex min-w-0 flex-1 flex-col">
      <div className="flex min-h-0 flex-1">
        <div className="min-h-0 min-w-0 flex-1 overflow-hidden bg-black">
          <Drawing />
        </div>
        <div className="flex w-2.5 shrink-0 flex-col border-r border-[#c6c5c3] bg-[#d5d4d2]" aria-hidden="true">
          <ScrollArrow d="m1 4 2-2 2 2z" />
          <div className="flex min-h-0 flex-1 flex-col">
            <span className="grow-[215]" />
            <span className="flex h-[45px] flex-col items-center justify-center gap-0.5 rounded-[5px] border border-[#a9a8a6] bg-linear-to-r from-[#fefefe] to-[#e4e4e2]">
              <span className="h-px w-1 bg-[#b5b5b3]" />
              <span className="h-px w-1 bg-[#b5b5b3]" />
              <span className="h-px w-1 bg-[#b5b5b3]" />
            </span>
            <span className="grow-[212]" />
          </div>
          <ScrollArrow d="m1 2 2 2 2-2z" />
        </div>
      </div>
      <div className="flex h-[11px] shrink-0 items-center border-b border-[#cfcecc]">
        <div className="flex h-2.5 min-w-0 flex-1 bg-[#d9d8d6]" aria-hidden="true">
          <ScrollArrow d="M4 1 2 3l2 2z" />
          <div className="flex min-w-0 flex-1">
            <span className="grow-[209]" />
            <span className="flex w-[56px] items-center justify-center gap-0.5 rounded-[5px] border border-[#a9a8a6] bg-linear-to-b from-[#fefefe] to-[#e4e4e2]">
              <span className="h-1 w-px bg-[#b5b5b3]" />
              <span className="h-1 w-px bg-[#b5b5b3]" />
              <span className="h-1 w-px bg-[#b5b5b3]" />
            </span>
            <span className="grow-[683]" />
          </div>
          <ScrollArrow d="m2 1 2 2-2 2z" />
        </div>
        <span className="w-[51px] shrink-0 pr-px text-right leading-[11px] whitespace-nowrap">10 / 100</span>
      </div>
    </main>
  );
}

/* ---------- docks ---------- */

const layers = ["0", "bogus_green", "center", "dim", "hidden"];

function Docks() {
  const [active, setActive] = useState("dim");
  return (
    <aside className="flex w-[168px] shrink-0 flex-col">
      <section aria-label="Layer List" className="flex min-h-0 grow-[3] basis-0 flex-col pt-0.5 pl-1.5">
        <DockTitle title="Layer List" />
        <div className="flex h-[21px] items-center justify-between pr-4 pl-3">
          <DockButton label="Show all layers"><Eye /></DockButton>
          <DockButton label="Hide all layers"><Eye color="#a9a9a7" /></DockButton>
          <DockButton label="Add layer"><Plus /></DockButton>
          <DockButton label="Remove layer"><Minus /></DockButton>
          <DockButton label="Edit layer"><Edit /></DockButton>
        </div>
        <ul className="min-h-0 flex-1 border border-r-0 border-[#c4c3c1] bg-[#fdfcfd]">
          {layers.map((name) => (
            <li key={name}>
              <button
                type="button"
                onClick={() => setActive(name)}
                className={`flex h-[15px] w-full items-center pl-px text-left leading-[15px] ${active === name ? "bg-[#e2e1df]" : ""}`}
              >
                <Eye />
                <span className="mr-0.5 ml-0.5"><Lock /></span>
                {name}
              </button>
            </li>
          ))}
        </ul>
      </section>
      <span className="flex h-[7px] shrink-0 items-center justify-center gap-0.5" aria-hidden="true">
        <span className="h-0.5 w-px bg-[#bbb]" />
        <span className="h-0.5 w-px bg-[#bbb]" />
        <span className="h-0.5 w-px bg-[#bbb]" />
      </span>
      <section aria-label="Block List" className="flex h-[219px] shrink-0 flex-col pl-1.5">
        <DockTitle title="Block List" />
        <div className="grid grid-cols-5 justify-items-center gap-y-[3px] pt-[11px] pr-[15px] pb-px pl-3">
          <DockButton label="Show all blocks"><Eye /></DockButton>
          <DockButton label="Hide all blocks"><Eye color="#a9a9a7" /></DockButton>
          <DockButton label="Add block"><Plus /></DockButton>
          <DockButton label="Remove block"><Minus /></DockButton>
          <DockButton label="Edit block attributes"><Edit /></DockButton>
          <span />
          <DockButton label="Edit block"><Frame /></DockButton>
          <span />
          <DockButton label="Insert block"><Frame green /></DockButton>
        </div>
        <ul aria-label="Blocks" className="mr-1.5 ml-1.5 min-h-0 flex-1 border border-[#c4c3c1] bg-[#fdfcfd]" />
      </section>
      <span className="h-1.5 shrink-0" />
    </aside>
  );
}

function CommandDock() {
  return (
    <section aria-label="Command line" className="flex shrink-0 flex-col">
      <span className="flex h-[9px] items-center justify-center gap-0.5" aria-hidden="true">
        <span className="h-0.5 w-px bg-[#bbb]" />
        <span className="h-0.5 w-px bg-[#bbb]" />
        <span className="h-0.5 w-px bg-[#bbb]" />
      </span>
      <div className="pb-0.5 pl-px">
        <DockTitle title="Command line" />
      </div>
      <textarea
        readOnly
        aria-label="Command history"
        rows={4}
        value={"Saved drawing:\nLoaded document: /home/numbnuts/part3.dxf"}
        className="block h-[55px] w-full resize-none border border-[#c0bfbd] bg-[#fdfcfd] px-0.5 pt-[3px] leading-[13px] outline-none"
      />
      <div className="flex h-[25px] items-center">
        <label htmlFor="command" className="w-[99px] shrink-0">Specify first edge</label>
        <input id="command" type="text" className="h-5 min-w-0 flex-1 bg-white px-1 outline-none" />
      </div>
    </section>
  );
}

export default function App() {
  return (
    <div className="flex h-screen min-h-[600px] flex-col overflow-hidden bg-black py-0.5 pr-0.5 font-['Roboto','Open_Sans',sans-serif] text-[12px] leading-4 text-[#4a4a4a]">
      <svg className="absolute h-0 w-0" aria-hidden="true">
        <defs>
          <linearGradient id="folderOrange" x1="0" y1="0" x2="0" y2="1">
            <stop offset="0" stopColor="#f9a06c" />
            <stop offset="1" stopColor="#ea5c20" />
          </linearGradient>
        </defs>
      </svg>
      <TopPanel />
      <div className="flex min-h-0 flex-1">
        <Launcher />
        <div className="flex min-w-0 flex-1 flex-col bg-[#0b1d45]">
          <TitleBar />
          <div className="flex min-h-0 flex-1 flex-col bg-[#eeeeec]">
            <MainToolbar />
            <PenToolbar />
            <div className="flex min-h-0 flex-1">
              <Palette />
              <div className="flex min-w-0 flex-1 flex-col">
                <div className="flex min-h-0 flex-1">
                  <CanvasArea />
                  <Docks />
                </div>
                <CommandDock />
              </div>
            </div>
          </div>
        </div>
      </div>
    </div>
  );
}
